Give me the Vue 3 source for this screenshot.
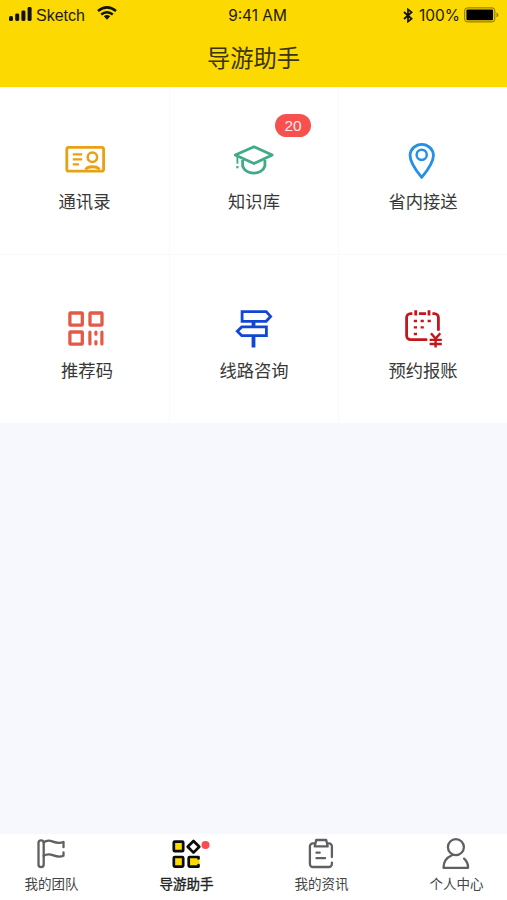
<script setup>
const tiles = [
  { key: 'contacts', label: '通讯录', box: '63 138 44 44' },
  { key: 'knowledge', label: '知识库', box: '232 138 44 44', badge: 20 },
  { key: 'transfer', label: '省内接送', box: '401 138 44 44' },
  { key: 'code', label: '推荐码', box: '63 306 44 44' },
  { key: 'route', label: '线路咨询', box: '232 306 44 44' },
  { key: 'expense', label: '预约报账', box: '401 306 44 44' },
]
const tabs = [
  { key: 'team', label: '我的团队', box: '29.5 837 44 34' },
  { key: 'guide', label: '导游助手', box: '164.5 837 44 34', active: true },
  { key: 'news', label: '我的资讯', box: '299.5 837 44 34' },
  { key: 'me', label: '个人中心', box: '434.5 837 44 34' },
]
</script>

<template>
  <div class="screen">
    <header class="header">
      <div class="status">
        <div class="status-left">
          <svg class="signal" viewBox="0 0 24 16">
            <rect x="0" y="10" width="4" height="5" rx="1.6" />
            <rect x="6.2" y="7.5" width="4" height="7.5" rx="1.4" />
            <rect x="12.4" y="4.5" width="4" height="10.5" rx="1.4" />
            <rect x="18.6" y="1" width="4" height="14" rx="1.4" />
          </svg>
          <span class="carrier">Sketch</span>
          <svg class="wifi" viewBox="0 0 20 14" fill="none" stroke="#111" stroke-width="2.5">
            <path d="M1 4.9Q10-2.2 19 4.9" />
            <path d="M4.2 8.5Q10 3.9 15.8 8.5" />
            <path d="M6.8 10.3Q10 7.8 13.2 10.3L10 13.7Z" fill="#111" stroke="none" />
          </svg>
        </div>
        <span class="time">9:41 AM</span>
        <div class="status-right">
          <svg class="bluetooth" viewBox="0 0 10 15" fill="none" stroke="#111" stroke-width="1.7">
            <path d="M1 4L8.6 10.8 5 13.6V1.4L8.6 4.2 1 11" />
          </svg>
          <span class="percent">100%</span>
          <svg class="battery" viewBox="0 0 36 16">
            <rect x=".7" y=".7" width="31" height="14.4" rx="2.8" fill="none" stroke="#7b6b08" stroke-width="1" />
            <rect x="2.5" y="2.4" width="27.4" height="11" rx="1" fill="#000" />
            <path d="M33.4 5.4q2 .6 2 2.5t-2 2.5z" fill="#8f7c08" />
          </svg>
        </div>
      </div>
      <h1 class="title">导游助手</h1>
    </header>

    <main class="grid">
      <div v-for="t in tiles" :key="t.key" class="tile">
        <div class="tile-icon">
          <svg :class="t.key" :viewBox="t.box" fill="none" stroke="currentColor" stroke-width="2.8">
            <template v-if="t.key === 'contacts'">
              <rect x="66.8" y="147.4" width="36.8" height="23.8" rx="2" />
              <path d="M72.8 154.4h9.4M72.8 159.4h9.4M72.8 164.4h6.2" stroke-width="2.1" />
              <circle cx="92.4" cy="157.3" r="4.7" stroke-width="2.5" />
              <path d="M85.5 169.5C88 165.8 97 165.8 99.5 169.5" stroke-width="2.8" />
            </template>
            <template v-else-if="t.key === 'knowledge'">
              <path d="M235.3 155L254 146.8 272.2 155 254 163.6Z" stroke-linejoin="round" />
              <path d="M242.6 160V166C245.5 175.5 262 175.5 264.9 166V160" />
              <path d="M237.4 156.5v7.2" stroke-width="1.9" />
              <path d="M237.4 166v2.3" stroke-width="2.2" />
            </template>
            <template v-else-if="t.key === 'transfer'">
              <path d="M421.7 177.4C418 173 410 163.2 410 155A11.8 11.8 0 0 1 433.5 155C433.5 163.2 425.4 173 421.7 177.4Z" stroke-linejoin="round" />
              <circle cx="421.7" cy="154.8" r="5.1" stroke-width="2.5" />
            </template>
            <template v-else-if="t.key === 'code'">
              <g stroke-width="3.3">
                <rect x="69.9" y="313" width="12.4" height="12.2" rx=".6" />
                <rect x="90" y="313" width="12" height="12.2" rx=".6" />
                <rect x="69.9" y="332" width="12.4" height="12.2" rx=".6" />
              </g>
              <g stroke-width="3.2" stroke-linecap="round">
                <path d="M89.9 332.2V344M101.9 332.2V344M95.9 332.2V334.2M95.9 341.6V344" />
              </g>
            </template>
            <template v-else-if="t.key === 'route'">
              <path d="M242.1 311.6H266.2L270.6 316.4 266.2 321.3H242.1Z" />
              <path d="M266.4 326.9H241.7L237.3 331.2 241.7 335.6H266.4Z" />
              <path d="M253.5 321.3V326.9M253.5 335.6V347.4" stroke-width="3.8" />
            </template>
            <template v-else>
              <path d="M412.4 313.6H410.6A4 4 0 0 0 406.6 317.6V335.6A4 4 0 0 0 410.6 339.6H427.3M419 313.6H426M432.4 313.6H434.4A4 4 0 0 1 438.4 317.6V330.8" />
              <path d="M415.7 310.2V315.6M429 310.2V315.6" />
              <path d="M413.8 321h3.2M420.6 321h3.2M427.6 321h3.2M413.8 327.4h3.2M420.6 327.4h3.2M413.8 334h3.2" stroke-width="2.4" />
              <path d="M431 333.3L435.6 338.6 440.3 333.3M435.6 338V347.6M429.6 339.9H441.8M429.6 344H441.8" stroke-width="2.4" />
            </template>
          </svg>
          <span v-if="t.badge" class="badge">{{ t.badge }}</span>
        </div>
        <span class="tile-label" :class="{ shifted: t.key === 'code' }">{{ t.label }}</span>
      </div>
    </main>

    <nav class="tabs">
      <div v-for="t in tabs" :key="t.key" class="tab" :class="{ active: t.active }">
        <svg class="tab-icon" :viewBox="t.box" fill="none" stroke="currentColor" stroke-width="2.3" stroke-linecap="round" stroke-linejoin="round">
          <template v-if="t.key === 'team'">
            <rect x="39" y="840.4" width="5.2" height="26.8" rx="2.6" />
            <path d="M44.2 842.2C52 837 54 845.8 64 842V847.2M44.2 855.8C52 850.6 55 859.5 64 855.8V852.4" />
          </template>
          <template v-else-if="t.key === 'guide'">
            <g stroke-width="2.7">
              <rect x="174.3" y="841.6" width="9.4" height="9.6" rx="1" fill="#fcdb00" />
              <path d="M194 841L199.8 846.8 194 852.6 188.2 846.8Z" />
              <rect x="174.3" y="857" width="9.4" height="9.6" rx="1" fill="#fcdb00" />
              <rect x="190" y="858" width="10" height="8" fill="#fcdb00" stroke="none" />
              <path d="M199 858.4V857H190.2Q189.2 857 189.2 858V865.6Q189.2 866.6 190.2 866.6H199V865.2" />
            </g>
            <circle cx="206" cy="845" r="4" fill="#fb4d50" stroke="none" />
          </template>
          <template v-else-if="t.key === 'news'">
            <path d="M315 843.4H313.4A3 3 0 0 0 310.4 846.4V864A3 3 0 0 0 313.4 867H329.4A3 3 0 0 0 332.4 864V862.6M328 843.4H329.4A3 3 0 0 1 332.4 846.4V857" />
            <path d="M316.7 840H326.7L328.2 846.4H315.2ZM317 852.7H320.2M317 858.2H325.6" />
          </template>
          <template v-else>
            <circle cx="456.4" cy="847.1" r="8" />
            <path d="M452.4 855.2C447 857.5 444 862 444 867.8H468.6C468.6 864 467.3 861 464.6 858.6" />
          </template>
        </svg>
        <span class="tab-label">{{ t.label }}</span>
      </div>
    </nav>
  </div>
</template>

<style>
body {
  background: #f6f8fd;
}
</style>

<style scoped>
.screen {
  display: flex;
  flex-direction: column;
  height: 900px;
  background: #f6f8fd;
  color: #383838;
  font-family: "Noto Sans CJK SC", sans-serif;
}
.header {
  height: 87px;
  background: #fcd900;
}
.status {
  display: grid;
  grid-template-columns: 124px 1fr 96px;
  align-items: center;
  height: 30px;
  padding: 0 8px 0 9px;
  font: 15.5px/20px Inter, "Liberation Sans", sans-serif;
  color: #1c1a08;
}
.status-left,
.status-right {
  display: flex;
  align-items: center;
}
.signal {
  flex: none;
  width: 24px;
  height: 16px;
  margin-bottom: 3px;
  fill: #111;
}
.carrier {
  width: 50px;
  margin: 2px 11px 0 3px;
  font-family: "Liberation Sans", sans-serif;
  font-size: 16px;
}
.wifi {
  flex: none;
  width: 20px;
  height: 14px;
  margin-bottom: 4px;
}
.time {
  margin: 1px 21px 0 0;
  padding-left: 0;
  text-align: center;
  font-size: 15.4px;
}
.bluetooth {
  flex: none;
  width: 10px;
  height: 15px;
}
.percent {
  width: 42px;
  margin: 2px 3px 0 6px;
  font-size: 15.5px;
}
.battery {
  flex: none;
  width: 35px;
  height: 16px;
}
.title {
  margin: 10px 0 0;
  font-size: 23.3px;
  font-weight: 400;
  line-height: 34px;
  text-align: center;
  color: #3a340c;
}
.grid {
  display: grid;
  grid-template-columns: 170px 169px 168px;
  grid-template-rows: 168px 169px;
  background: #fff;
}
.tile {
  display: flex;
  flex-direction: column;
  align-items: center;
  padding-top: 51px;
  border-right: 1px solid #f9f9fa;
  border-bottom: 1px solid #f9f9fa;
}
.tile:nth-child(3n) {
  border-right: 0;
}
.tile:nth-child(-n + 3) {
  padding-top: 50.5px;
}
.tile-icon {
  position: relative;
  height: 44px;
}
.tile-icon svg {
  display: block;
  width: 44px;
  height: 44px;
}
.contacts {
  color: #e9a113;
}
.knowledge {
  color: #40ab88;
}
.transfer {
  color: #2490e8;
}
.code {
  color: #e35b48;
}
.route {
  color: #1246d4;
}
.expense {
  color: #c5161b;
}
.badge {
  position: absolute;
  top: -23.5px;
  left: 43px;
  width: 36px;
  height: 23px;
  border-radius: 12px;
  background: #f7504f;
  color: #ffeaea;
  font: 15.5px/24px "Liberation Sans", sans-serif;
  text-align: center;
}
.tile-label {
  margin-top: 7.5px;
  font-size: 17.3px;
  line-height: 24px;
}
.tile-label.shifted {
  padding-left: 5px;
}
.tabs {
  display: flex;
  justify-content: space-between;
  box-sizing: border-box;
  height: 66px;
  margin-top: auto;
  padding: 3px 24px 0;
  background: #fff;
}
.tab {
  display: flex;
  flex-direction: column;
  align-items: center;
  width: 54px;
  color: #606060;
}
.tab-icon {
  width: 44px;
  height: 34px;
  flex: none;
  overflow: visible;
}
.tab-label {
  margin-top: 2px;
  padding-left: 1px;
  font-size: 13.5px;
  line-height: 20px;
  color: #444;
  white-space: nowrap;
}
.active {
  color: #0b0b0b;
}
.active .tab-label {
  color: #222;
  -webkit-text-stroke: 0.35px #222;
}
</style>
